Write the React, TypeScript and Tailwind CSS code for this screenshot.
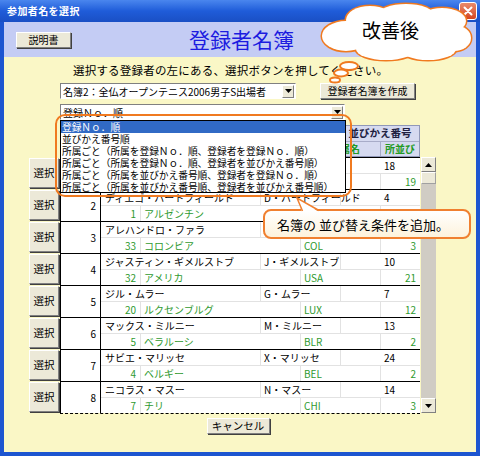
import React from "react";

interface Entry {
  no: number;
  name: string;
  short: string;
  num: number | string;
  cno: number;
  country: string;
  code: string;
  cnum: number | string;
}

const rows: Entry[] = [
  { no: 1, name: "ラファエル・ナダル", short: "R・ナダル", num: 18, cno: 2, country: "スペイン", code: "ESP", cnum: 19 },
  { no: 2, name: "ディエゴ・ハートフィールド", short: "D・ハートフィールド", num: 4, cno: 1, country: "アルゼンチン", code: "ARG", cnum: 1 },
  { no: 3, name: "アレハンドロ・ファラ", short: "A・ファラ", num: 9, cno: 33, country: "コロンビア", code: "COL", cnum: 3 },
  { no: 4, name: "ジャスティン・ギメルストブ", short: "J・ギメルストブ", num: 10, cno: 32, country: "アメリカ", code: "USA", cnum: 21 },
  { no: 5, name: "ジル・ムラー", short: "G・ムラー", num: 7, cno: 20, country: "ルクセンブルグ", code: "LUX", cnum: 12 },
  { no: 6, name: "マックス・ミルニー", short: "M・ミルニー", num: 13, cno: 5, country: "ベラルーシ", code: "BLR", cnum: 2 },
  { no: 7, name: "サビエ・マリッセ", short: "X・マリッセ", num: 24, cno: 4, country: "ベルギー", code: "BEL", cnum: 2 },
  { no: 8, name: "ニコラス・マスー", short: "N・マスー", num: 14, cno: 7, country: "チリ", code: "CHI", cnum: 3 },
];

const sortOptions = [
  "登録Ｎｏ．順",
  "並びかえ番号順",
  "所属ごと（所属を登録Ｎｏ．順、登録者を登録Ｎｏ．順）",
  "所属ごと（所属を登録Ｎｏ．順、登録者を並びかえ番号順）",
  "所属ごと（所属を並びかえ番号順、登録者を登録Ｎｏ．順）",
  "所属ごと（所属を並びかえ番号順、登録者を並びかえ番号順）",
];

function Btn({ className = "", children }: { className?: string; children: React.ReactNode }) {
  return (
    <div
      className={`flex items-center justify-center bg-[#ece9d8] border border-t-white border-l-white border-r-[#808080] border-b-[#808080] shadow-[1px_1px_0_#404040] leading-none text-black ${className}`}
    >
      {children}
    </div>
  );
}

function Arrow({ up = false }: { up?: boolean }) {
  return (
    <svg width="7" height="4" viewBox="0 0 7 4">
      <path d={up ? "M0 4 L3.5 0 L7 4 Z" : "M0 0 L7 0 L3.5 4 Z"} fill="#000" />
    </svg>
  );
}

function Combo({ width, text }: { width: string; text: string }) {
  return (
    <div className={`${width} h-[16px] flex items-center bg-white border border-t-[#808080] border-l-[#808080] border-r-white border-b-white`}>
      <span className="flex-1 pl-[2px] text-[10px] leading-[13px] whitespace-nowrap">{text}</span>
      <div className="w-[12px] h-[13px] mr-[1px] flex items-center justify-center bg-[#ece9d8] border border-t-white border-l-white border-r-[#808080] border-b-[#808080]">
        <Arrow />
      </div>
    </div>
  );
}

export default function App() {
  return (
    <div className="relative w-[480px] h-[456px] overflow-hidden bg-[#1d55d0] font-['Noto_Sans_CJK_JP','Noto_Sans',sans-serif] text-black flex flex-col">
      {/* title bar */}
      <div className="h-[22px] shrink-0 flex items-center justify-between pl-[7px] pr-[3px] bg-gradient-to-b from-[#4a86ee] via-[#1f5cd9] to-[#1a4fc4]">
        <span className="text-white text-[10px] font-bold leading-none tracking-[0.4px]">参加者名を選択</span>
        <div className="w-[18px] h-[18px] rounded-[3px] border border-white bg-gradient-to-b from-[#e88a6a] to-[#d5431c] flex items-center justify-center">
          <svg width="10" height="10" viewBox="0 0 10 10">
            <path d="M1.5 1.5 L8.5 8.5 M8.5 1.5 L1.5 8.5" stroke="#fff" strokeWidth="2" strokeLinecap="round" />
          </svg>
        </div>
      </div>

      {/* client area */}
      <div className="flex-1 mx-[4px] mb-[4px] flex flex-col bg-[#faf7c6]">
        <div className="h-[35px] shrink-0 bg-[#c4ccf4] flex items-center pl-[12px]">
          <Btn className="w-[55px] h-[16px] text-[10px]">説明書</Btn>
          <div className="ml-[118px] text-[21px] leading-none text-[#1c1ce0]">登録者名簿</div>
        </div>

        <div className="pl-[69px] mt-[6px] h-[14px] text-[11.5px] leading-[14px] tracking-[0.2px] whitespace-nowrap">
          選択する登録者の左にある、選択ボタンを押してください。
        </div>

        <div className="flex items-center mt-[6px] pl-[56px]">
          <Combo width="w-[236px]" text="名簿2：全仏オープンテニス2006男子S出場者" />
          <Btn className="ml-[24px] w-[95px] h-[16px] text-[10px]">登録者名簿を作成</Btn>
        </div>

        <div className="mt-[5px] pl-[56px]">
          <Combo width="w-[285px]" text="登録Ｎｏ．順" />
        </div>

        {/* grid */}
        <div className="mt-[5px] flex pl-[25px]">
          <div className="w-[31px] flex flex-col pt-[32px]">
            {rows.map((r) => (
              <div key={r.no} className="h-[32px] py-[1px]">
                <Btn className="w-[30px] h-[30px] text-[10.5px]">選択</Btn>
              </div>
            ))}
          </div>

          <div className="w-[360px] flex flex-col text-[10px] leading-none">
            {/* header */}
            <div className="h-[32px] flex flex-col bg-[#d6daf0] border border-[#9098b8] font-bold">
              <div className="flex-1 flex text-[#202040]">
                <div className="w-[40px] border-r border-[#a8acc8]" />
                <div className="w-[160px] border-r border-[#a8acc8] flex items-center justify-center">氏名</div>
                <div className="w-[80px] border-r border-[#a8acc8] flex items-center justify-center">略名</div>
                <div className="flex-1 flex items-center justify-center text-[10.5px]">並びかえ番号</div>
              </div>
              <div className="flex-1 flex text-[#229922] border-t border-[#a8acc8]">
                <div className="w-[40px] border-r border-[#a8acc8]" />
                <div className="w-[40px] border-r border-[#a8acc8] flex items-center justify-center">No</div>
                <div className="w-[160px] border-r border-[#a8acc8] flex items-center justify-center">所属</div>
                <div className="w-[80px] border-r border-[#a8acc8] flex items-center justify-end pr-[20px]">所属名</div>
                <div className="flex-1 flex items-center justify-center">所並び</div>
              </div>
            </div>

            {rows.map((r) => (
              <div key={r.no} className="h-[32px] flex bg-white border-l border-t border-black">
                <div className="w-[40px] border-r border-black flex items-center justify-end pr-[4px]">{r.no}</div>
                <div className="flex-1 flex flex-col">
                  <div className="flex-1 flex">
                    <div className="w-[160px] border-r border-[#e2e2e2] flex items-center pl-[4px] whitespace-nowrap">{r.name}</div>
                    <div className="w-[80px] border-r border-[#e2e2e2] flex items-center pl-[3px] whitespace-nowrap">{r.short}</div>
                    <div className="flex-1 flex items-center pl-[43px]">{r.num}</div>
                  </div>
                  <div className="flex-1 flex text-[#2f9a2f] border-t border-[#e2e2e2]">
                    <div className="w-[40px] border-r border-[#e2e2e2] flex items-center justify-end pr-[4px]">{r.cno}</div>
                    <div className="w-[160px] border-r border-[#e2e2e2] flex items-center pl-[3px] whitespace-nowrap">{r.country}</div>
                    <div className="w-[80px] border-r border-[#e2e2e2] flex items-center pl-[3px]">{r.code}</div>
                    <div className="flex-1 flex items-center justify-end pr-[4px]">{r.cnum}</div>
                  </div>
                </div>
              </div>
            ))}
            <div className="border-t border-dashed border-black" />
          </div>

          {/* scrollbar */}
          <div className="ml-[1px] mt-[32px] w-[15px] h-[256px] flex flex-col bg-[#d0ccc4]">
            <div className="h-[15px] flex items-center justify-center bg-[#ece9d8] border border-t-white border-l-white border-r-[#808080] border-b-[#808080]">
              <Arrow up />
            </div>
            <div className="h-[12px] bg-[#ece9d8] border border-t-white border-l-white border-r-[#a0a0a0] border-b-[#a0a0a0]" />
            <div className="flex-1" />
            <div className="h-[15px] flex items-center justify-center bg-[#ece9d8] border border-t-white border-l-white border-r-[#808080] border-b-[#808080]">
              <Arrow />
            </div>
          </div>
        </div>

        <div className="mt-[4px] flex justify-center pr-[4px]">
          <Btn className="w-[63px] h-[16px] text-[10.5px]">キャンセル</Btn>
        </div>
      </div>

      {/* open drop-down list */}
      <div className="absolute left-[60px] top-[120px] w-[286px] h-[73px] bg-white border border-black flex flex-col text-[9.7px] leading-[12px]">
        {sortOptions.map((o, i) => (
          <div key={i} className={`h-[12px] pl-[1px] whitespace-nowrap ${i === 0 ? "bg-[#316ac5] text-white" : ""}`}>
            {o}
          </div>
        ))}
      </div>
      <div className="absolute left-[55px] top-[114px] w-[297px] h-[83px] rounded-[10px] border-2 border-[#f07a20]" />

      {/* callout */}
      <div className="absolute left-[263px] top-[209px] w-[208px] h-[30px] rounded-[8px] border-2 border-[#f08030] bg-gradient-to-b from-white to-[#fdf2dc] flex items-center pl-[12px] text-[13px] leading-none whitespace-nowrap">
        名簿の 並び替え条件を追加。
      </div>
      <svg className="absolute left-[290px] top-[195px]" width="40" height="20" viewBox="0 0 40 20">
        <polygon points="7,3 12,17 29,17" fill="#fff" />
        <path d="M12.5 16 L7 3 L29 15.5" fill="none" stroke="#f08030" strokeWidth="1.5" />
      </svg>

      {/* cloud */}
      <svg className="absolute left-[318px] top-[2px]" width="160" height="86" viewBox="0 0 160 86">
        <g fill="none" stroke="#f07a20" strokeWidth="3">
          <ellipse cx="28" cy="34" rx="24" ry="15" />
          <ellipse cx="52" cy="18" rx="24" ry="14" />
          <ellipse cx="88" cy="13" rx="28" ry="11" />
          <ellipse cx="124" cy="19" rx="24" ry="13" />
          <ellipse cx="136" cy="36" rx="17" ry="13" />
          <ellipse cx="110" cy="47" rx="28" ry="11" />
          <ellipse cx="68" cy="47" rx="30" ry="11" />
        </g>
        <g fill="#fff">
          <ellipse cx="28" cy="34" rx="24" ry="15" />
          <ellipse cx="52" cy="18" rx="24" ry="14" />
          <ellipse cx="88" cy="13" rx="28" ry="11" />
          <ellipse cx="124" cy="19" rx="24" ry="13" />
          <ellipse cx="136" cy="36" rx="17" ry="13" />
          <ellipse cx="110" cy="47" rx="28" ry="11" />
          <ellipse cx="68" cy="47" rx="30" ry="11" />
          <ellipse cx="82" cy="32" rx="52" ry="18" />
        </g>
        <g fill="#fff" stroke="#f07a20" strokeWidth="2">
          <ellipse cx="31" cy="64" rx="9" ry="4" />
          <ellipse cx="23" cy="71" rx="7" ry="3.5" />
          <ellipse cx="17" cy="78" rx="5" ry="2.5" />
        </g>
      </svg>
      <div className="absolute left-[362px] top-[19px] text-[19px] leading-[22px] whitespace-nowrap">改善後</div>
    </div>
  );
}
